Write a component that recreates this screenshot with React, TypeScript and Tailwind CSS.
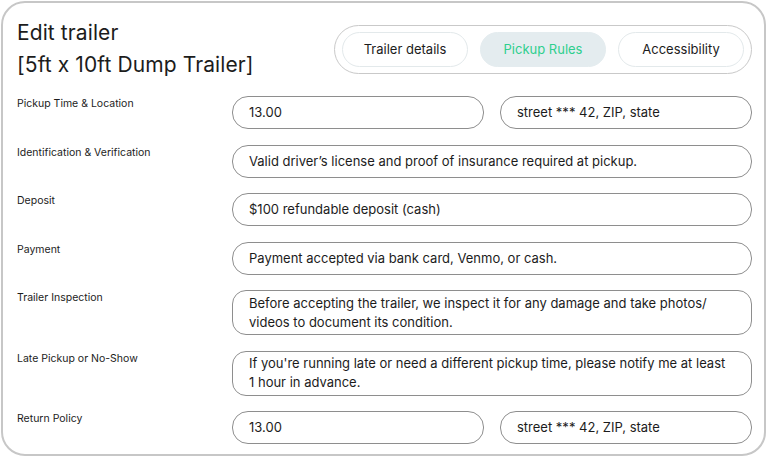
import React from "react";

type Row = {
  label: string;
  values: React.ReactNode[];
  multi?: boolean;
};

const rows: Row[] = [
  { label: "Pickup Time & Location", values: ["13.00", "street *** 42, ZIP, state"] },
  {
    label: "Identification & Verification",
    values: ["Valid driver’s license and proof of insurance required at pickup."],
  },
  { label: "Deposit", values: ["$100 refundable deposit (cash)"] },
  { label: "Payment", values: ["Payment accepted via bank card, Venmo, or cash."] },
  {
    label: "Trailer Inspection",
    multi: true,
    values: [
      <>
        Before accepting the trailer, we inspect it for any damage and take photos/
        <br />
        videos to document its condition.
      </>,
    ],
  },
  {
    label: "Late Pickup or No-Show",
    multi: true,
    values: [
      <>
        If you're running late or need a different pickup time, please notify me at least
        <br />1 hour in advance.
      </>,
    ],
  },
  { label: "Return Policy", values: ["13.00", "street *** 42, ZIP, state"] },
];

const tabs = ["Trailer details", "Pickup Rules", "Accessibility"];

export default function App() {
  const [active, setActive] = React.useState("Pickup Rules");

  return (
    <div
      className="w-[767px] h-[457px] bg-white p-px text-[#1c1c1c]"
      style={{ fontFamily: "Inter, 'Noto Sans', sans-serif" }}
    >
      <div className="h-full rounded-[24px] border-2 border-[#c7c7c7] pl-[14px] pr-[12px] pt-[14px]">
        {/* Header */}
        <div className="flex items-start justify-between">
          <h1 className="text-[21px] leading-[32px] font-normal tracking-[0.1px]">
            Edit trailer
            <br />
            [5ft x 10ft Dump Trailer]
          </h1>
          <div className="mt-[8px] flex items-center gap-[12px] rounded-full border border-[#c9c9c9] px-[7px] py-[6px]">
            {tabs.map((t) => (
              <button
                key={t}
                onClick={() => setActive(t)}
                className={`h-[35px] w-[126px] rounded-full border text-[13px] ${
                  active === t
                    ? "bg-[#e4ecef] border-[#e4ecef] text-[#2fcf8e]"
                    : "bg-white border-[#e3e9eb] text-[#1c1c1c]"
                }`}
              >
                {t}
              </button>
            ))}
          </div>
        </div>

        {/* Rows */}
        <div className="mt-[15px] flex flex-col gap-[15.5px]">
          {rows.map((r) => (
            <div key={r.label} className="flex items-start">
              <div className="w-[215px] shrink-0 pt-[1px] text-[10.5px] leading-[14px] text-[#1c1c1c]">
                {r.label}
              </div>
              <div className="flex flex-1 gap-[16px]">
                {r.values.map((v, i) => (
                  <div
                    key={i}
                    className={`flex-1 border border-[#8e8e8e] px-[16px] text-[13px] leading-[19px] ${
                      r.multi ? "rounded-[14px] py-[2.5px]" : "rounded-[16px] py-[6px]"
                    }`}
                  >
                    {v}
                  </div>
                ))}
              </div>
            </div>
          ))}
        </div>
      </div>
    </div>
  );
}
